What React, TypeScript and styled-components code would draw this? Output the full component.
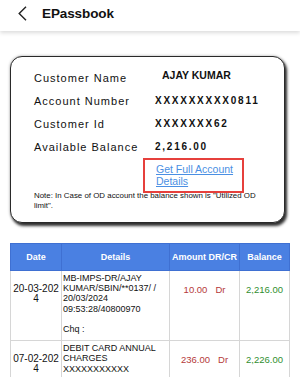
import React from "react";
import styled, { createGlobalStyle } from "styled-components";

const Global = createGlobalStyle`
  html, body { margin: 0; padding: 0; background: #ffffff; overflow: hidden; }
  body { font-family: "Liberation Sans", Arial, sans-serif; color: #111; }
`;

const Page = styled.div`
  width: 300px;
  min-height: 377px;
  background: #fff;
`;

const Header = styled.header`
  height: 31px;
  display: flex;
  align-items: center;
  gap: 15px;
  padding-left: 18px;
  background: #fff;
  box-shadow: 0 2px 4px rgba(0, 0, 0, 0.14);
  position: relative;
  z-index: 1;
`;

const BackIcon = styled.svg`
  width: 9px;
  height: 15px;
  display: block;
  margin-top: -4px;
`;

const Title = styled.h1`
  margin: -4px 0 0 0;
  font-size: 13.5px;
  font-weight: 700;
  color: #111;
  letter-spacing: -0.1px;
`;

const Content = styled.main`
  padding: 25px 0 0 10px;
  width: 275px;
  display: flex;
  flex-direction: column;
  gap: 20px;
`;

const Card = styled.section`
  border: 1px solid #2a2a2a;
  border-radius: 12px;
  background: #fff;
  box-shadow: 2px 3px 3px rgba(0, 0, 0, 0.8), 0 0 3px rgba(0, 0, 0, 0.35);
  padding: 9px 20px 11px 23px;
  display: flex;
  flex-direction: column;
`;

const InfoGrid = styled.div`
  display: grid;
  grid-template-columns: 121px 1fr;
  grid-auto-rows: 23px;
  align-items: center;
`;

const Label = styled.span`
  font-size: 11px;
  letter-spacing: 1px;
  color: #111;
  white-space: nowrap;
`;

const Value = styled.span<{ $plain?: boolean }>`
  font-size: ${(p) => (p.$plain ? "10.5px" : "10px")};
  font-weight: 700;
  letter-spacing: ${(p) => (p.$plain ? "0" : "1.75px")};
  color: #111;
  white-space: nowrap;
  padding-left: ${(p) => (p.$plain ? "7px" : "0")};
  margin-top: ${(p) => (p.$plain ? "-6px" : "0")};
`;

const LinkBox = styled.div`
  margin-left: 109px;
  width: 101px;
  box-sizing: border-box;
  border: 2px solid #e6403c;
  padding: 4px 4px 4px 11px;
`;

const FullLink = styled.a`
  font-size: 10.5px;
  line-height: 11.5px;
  color: #4a8fe3;
  text-decoration: underline;
  display: block;
`;

const Note = styled.p`
  margin: -2px 0 0 0;
  font-size: 7.9px;
  line-height: 10px;
  color: #111;
`;

const Table = styled.table`
  width: 275px;
  border-collapse: collapse;
  table-layout: fixed;
  font-family: "Liberation Sans", Arial, sans-serif;
`;

const Th = styled.th<{ $w: number }>`
  width: ${(p) => p.$w}px;
  height: 26px;
  background: #4a80e2;
  color: #fff;
  font-size: 9px;
  font-weight: 700;
  border: 1px solid #3f70d2;
  padding: 0;
  white-space: nowrap;
  text-align: center;
  vertical-align: middle;
`;

const Td = styled.td<{ $pt: number; $align?: string }>`
  border: 1px solid #d6d6d6;
  vertical-align: top;
  padding: ${(p) => p.$pt}px 1px 6px 1px;
  text-align: ${(p) => p.$align || "left"};
`;

const DateText = styled.div`
  font-size: 10px;
  line-height: 10px;
  word-break: break-all;
  color: #111;
`;

const DetailLine = styled.div`
  font-size: 9px;
  line-height: 10.2px;
  min-height: 10.2px;
  white-space: nowrap;
  color: #111;
`;

const Amount = styled.span<{ $tone: "dr" | "bal" }>`
  font-size: 9.5px;
  color: ${(p) => (p.$tone === "dr" ? "#b53a3a" : "#2f8f2f")};
  white-space: nowrap;
`;

const DrMark = styled.span`
  margin-left: 8px;
`;

const rows = [
  {
    date: "20-03-2024",
    details: ["MB-IMPS-DR/AJAY", "KUMAR/SBIN/**0137/ /", "20/03/2024", "09:53:28/40800970", "", "Chq :"],
    amount: "10.00",
    type: "Dr",
    balance: "2,216.00",
  },
  {
    date: "07-02-2024",
    details: ["DEBIT CARD ANNUAL", "CHARGES", "XXXXXXXXXXX"],
    amount: "236.00",
    type: "Dr",
    balance: "2,226.00",
  },
];

export default function App() {
  return (
    <Page>
      <Global />
      <Header>
        <BackIcon viewBox="0 0 9 15">
          <polyline points="8,0.8 1.2,7.5 8,14.2" fill="none" stroke="#222" strokeWidth="1.4" />
        </BackIcon>
        <Title>EPassbook</Title>
      </Header>
      <Content>
        <Card>
          <InfoGrid>
            <Label>Customer Name</Label>
            <Value $plain>AJAY KUMAR</Value>
            <Label>Account Number</Label>
            <Value>XXXXXXXXX0811</Value>
            <Label>Customer Id</Label>
            <Value>XXXXXXX62</Value>
            <Label>Available Balance</Label>
            <Value>2,216.00</Value>
          </InfoGrid>
          <LinkBox>
            <FullLink href="#">Get Full Account Details</FullLink>
          </LinkBox>
          <Note>Note: In Case of OD account the balance shown is "Utilized OD limit".</Note>
        </Card>
        <Table>
          <thead>
            <tr>
              <Th $w={50}>Date</Th>
              <Th $w={107}>Details</Th>
              <Th $w={69}>Amount DR/CR</Th>
              <Th $w={49}>Balance</Th>
            </tr>
          </thead>
          <tbody>
            {rows.map((r) => (
              <tr key={r.date}>
                <Td $pt={13} $align="center">
                  <DateText>{r.date}</DateText>
                </Td>
                <Td $pt={2}>
                  {r.details.map((l, i) => (
                    <DetailLine key={i}>{l}</DetailLine>
                  ))}
                </Td>
                <Td $pt={8} $align="center">
                  <Amount $tone="dr">
                    {r.amount}
                    <DrMark>{r.type}</DrMark>
                  </Amount>
                </Td>
                <Td $pt={8} $align="center">
                  <Amount $tone="bal">{r.balance}</Amount>
                </Td>
              </tr>
            ))}
          </tbody>
        </Table>
      </Content>
    </Page>
  );
}
